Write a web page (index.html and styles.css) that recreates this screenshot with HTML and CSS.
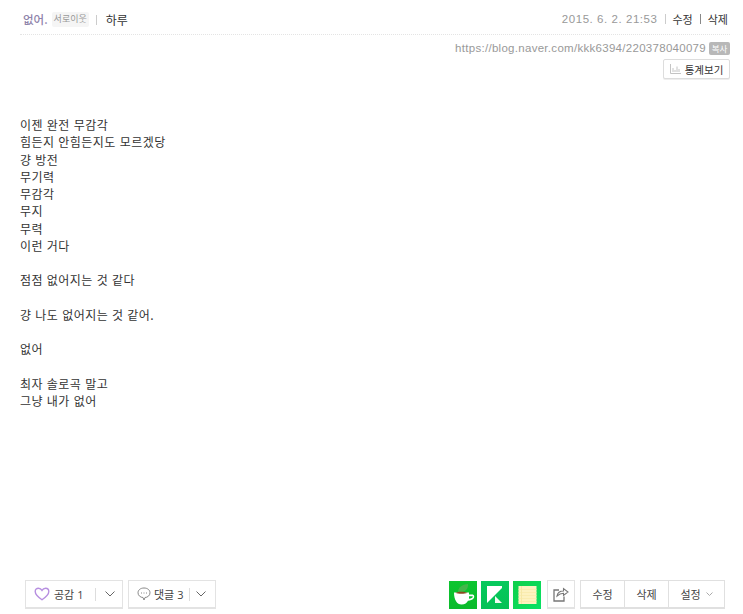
FILE: index.html
```html
<!DOCTYPE html>
<html lang="ko">
<head>
<meta charset="utf-8">
<title>없어.</title>
<link rel="stylesheet" href="styles.css">
</head>
<body>
<div class="page">
  <header class="head">
    <div class="head-left">
      <span class="nick">없어.</span>
      <span class="tag">서로이웃</span>
      <span class="vsep"></span>
      <span class="cat">하루</span>
    </div>
    <div class="head-right">
      <span class="date">2015. 6. 2. 21:53</span>
      <span class="vsep small"></span>
      <span class="act">수정</span>
      <span class="vsep small dark"></span>
      <span class="act">삭제</span>
    </div>
  </header>
  <div class="urlrow">
    <span class="url">https://blog.naver.com/kkk6394/220378040079</span>
    <span class="copy">복사</span>
  </div>
  <div class="statrow">
    <button class="stat">
      <svg class="stat-ico" width="11" height="10" viewBox="0 0 11 10"><path d="M.5 0v9.500H11M3 4v4M5 6v2M7 2.500V8M9 5v3" fill="none" stroke="#c4c4c4"/></svg>
      통계보기
    </button>
  </div>
  <main class="body">
    <p>이젠 완전 무감각</p>
    <p>힘든지 안힘든지도 모르겠당</p>
    <p>걍 방전</p>
    <p>무기력</p>
    <p>무감각</p>
    <p>무지</p>
    <p>무력</p>
    <p>이런 거다</p>
    <p>&nbsp;</p>
    <p>점점 없어지는 것 같다</p>
    <p>&nbsp;</p>
    <p>걍 나도 없어지는 것 같어.</p>
    <p>&nbsp;</p>
    <p>없어</p>
    <p>&nbsp;</p>
    <p>최자 솔로곡 말고</p>
    <p>그냥 내가 없어</p>
  </main>
  <footer class="foot">
    <div class="foot-left">
      <div class="box like">
        <svg width="16" height="14" viewBox="0 0 16 14"><path d="M8 12.800C4 10 1.200 7.500 1.200 4.500 1.200 2.500 2.700 1.200 4.400 1.200 5.800 1.200 7.200 2 8 3.400 8.800 2 10.200 1.200 11.600 1.200 13.300 1.200 14.800 2.500 14.800 4.500 14.800 7.500 12 10 8 12.800Z" fill="none" stroke="#b78fe0" stroke-width="1.400"/></svg>
        <span class="lbl">공감 <b>1</b></span>
        <span class="in-sep"></span>
        <svg class="chev" width="10" height="6" viewBox="0 0 10 6"><path d="M.5.500 5 5 9.500.5" fill="none" stroke="#666"/></svg>
      </div>
      <div class="box cmt">
        <svg width="14" height="14" viewBox="0 0 14 14"><path d="M7 1C3.500 1 1 3 1 5.800 1 8.500 3.500 10.500 6 10.500L7 13 8 10.500C10.500 10.500 13 8.500 13 5.800 13 3 10.500 1 7 1Z" fill="none" stroke="#888"/><path d="M4 6h1M6.500 6h1M9 6h1" stroke="#888"/></svg>
        <span class="lbl">댓글 <b>3</b></span>
        <span class="in-sep"></span>
        <svg class="chev" width="10" height="6" viewBox="0 0 10 6"><path d="M.5.500 5 5 9.500.5" fill="none" stroke="#666"/></svg>
      </div>
    </div>
    <div class="foot-right">
      <span class="app cafe">
        <svg width="28" height="28" viewBox="0 0 28 28"><path d="M9 11C9 6.500 13 3.500 19 3 19.500 8 16 12 9 11Z" fill="#43b649"/><path d="M5 11.500H20V13.500H23C25.500 13.500 25.800 16 24.500 17.500 23.300 18.900 21.300 19.500 19 19.700 17.800 22 16 23.500 12.500 23.500 8 23.500 5 19 5 11.500ZM20 15.200V17.800C22 17.500 23.800 16.800 23.800 15.800 23.800 15.300 23.300 15.200 22.800 15.200Z" fill="#fff" fill-rule="evenodd"/><path d="M6.500 11.800C9 10.300 15.500 10.300 18.500 11.800 15.500 13.200 9 13.200 6.500 11.800Z" fill="#8a4a20"/></svg>
      </span>
      <span class="app keep">
        <svg width="28" height="28" viewBox="0 0 28 28"><path d="M6 5H21V7L13 15 6 22Z" fill="#fff"/><path d="M14 15 21 22H14Z" fill="#f2fbf3"/></svg>
      </span>
      <span class="app memo">
        <svg width="28" height="28" viewBox="0 0 28 28"><rect x="5.500" y="5" width="18" height="18" fill="#fdf2c0"/><path d="M5.500 8.500H23.500M5.500 11.500H23.500M5.500 14.500H23.500M5.500 17.500H23.500M5.500 20.500H23.500" stroke="#f8eaa8" stroke-opacity=".7"/><path d="M8.500 5V23" stroke="#f5e8a6"/></svg>
      </span>
      <span class="share">
        <svg width="16" height="15" viewBox="0 0 16 15"><path d="M6 3H1V14H11V9.500" fill="none" stroke="#777" stroke-width="1.300"/><path d="M4 9C4.500 6 7 4 10.500 4V1.500L15 5 10.500 8.500V6.300C8 6.300 5.800 7.300 4 9Z" fill="none" stroke="#777" stroke-width="1.100"/></svg>
      </span>
      <div class="group">
        <span class="g-btn">수정</span>
        <span class="g-btn">삭제</span>
        <span class="g-btn set">설정
          <svg width="7" height="4" viewBox="0 0 7 4"><path d="M.5.500 3.500 3.500 6.500.5" fill="none" stroke="#aaa"/></svg>
        </span>
      </div>
    </div>
  </footer>
</div>
</body>
</html>
```

FILE: styles.css
```css
* { box-sizing: border-box; }
html, body { margin: 0; padding: 0; background: #fff; }
body {
  font-family: "Noto Sans CJK KR", "Liberation Sans", sans-serif;
  font-size: 11px;
  color: #333;
}
.page {
  width: 743px;
  height: 614px;
  display: flex;
  flex-direction: column;
}
.head {
  margin: 0 13px 0 20px;
  height: 35px;
  padding: 4px 2px 0 3px;
  border-bottom: 1px dotted #e4e4e4;
  display: flex;
  justify-content: space-between;
  align-items: center;
}
.head-left, .head-right { display: flex; align-items: center; }
.nick { color: #8f84ab; font-size: 11.500px; font-weight: 500; }
.tag {
  margin-left: 4px;
  padding: 0 2px;
  height: 15px;
  line-height: 14px;
  background: #f5f5f5;
  border-radius: 2px;
  font-size: 9px;
  color: #999;
}
.vsep { width: 1px; height: 10px; background: #ccc; margin: 2px 9px 0 7px; }
.cat { color: #333; font-size: 12px; }
.date { color: #999; font-family: "Liberation Sans", sans-serif; font-size: 11.500px; letter-spacing: .55px; }
.vsep.small { margin: 0 7px; }
.vsep.dark { background: #888; margin: 0 7px; }
.act { color: #333; font-size: 11px; }
.urlrow {
  margin: 5px 13px 0 0;
  height: 16px;
  display: flex;
  justify-content: flex-end;
  align-items: center;
}
.url { color: #999; font-family: "Liberation Sans", sans-serif; font-size: 11.500px; letter-spacing: .29px; }
.copy {
  margin-left: 3px;
  width: 21px;
  height: 13px;
  line-height: 13px;
  text-align: center;
  background: #b8b8b8;
  border-radius: 2px;
  color: #fff;
  font-size: 8.500px;
}
.statrow { margin: 3px 13px 0 0; display: flex; justify-content: flex-end; }
.stat {
  width: 67px;
  height: 20px;
  padding: 0;
  background: #fff;
  border: 1px solid #ddd;
  border-radius: 2px;
  box-shadow: 0 1px 0 #eee;
  font-family: inherit;
  font-size: 10.500px;
  color: #333;
  display: flex;
  align-items: center;
  justify-content: center;
  gap: 4px;
}
.body {
  flex: 1;
  margin: 37px 0 0 20px;
  font-size: 12px;
  letter-spacing: .46px;
  line-height: 17.250px;
  color: #333;
}
.body p { margin: 0; }
.foot {
  margin: 0 18px 5px 25px;
  height: 29px;
  display: flex;
  justify-content: space-between;
  align-items: flex-start;
}
.foot-left, .foot-right { display: flex; }
.foot-left { gap: 5px; }
.box {
  height: 29px;
  border: 1px solid #e3e3e3;
  border-bottom-width: 2px;
  display: flex;
  align-items: center;
  font-size: 11px;
  color: #444;
}
.like { width: 98px; padding-left: 8px; }
.cmt { width: 88px; padding-left: 8px; }
.like .lbl { margin-left: 4px; }
.cmt .lbl { margin-left: 3px; }
.lbl b { font-family: "Open Sans", sans-serif; font-weight: 400; font-size: 11px; }
.in-sep { width: 1px; height: 13px; background: #ddd; margin: 0 9px 0 11px; }
.cmt .in-sep { margin: 0 6px 0 5px; }
.foot-right { gap: 4px; }
.app { width: 28px; height: 28px; display: block; margin-top: 1px; }
.app svg { display: block; }
.cafe { background: linear-gradient(#0cc52f, #0abb2b); }
.keep { background: linear-gradient(#07c95c, #04c155); }
.memo { background: linear-gradient(135deg, #10cf4a, #08e264); }
.share {
  width: 28px;
  height: 29px;
  margin-left: 2px;
  border: 1px solid #e3e3e3;
  border-bottom-width: 2px;
  display: flex;
  align-items: center;
  justify-content: center;
}
.group {
  height: 29px;
  margin-left: 1px;
  width: 145px;
  display: flex;
  border: 1px solid #e0e0e0;
  border-bottom-width: 2px;
}
.g-btn {
  width: 44px;
  display: flex;
  align-items: center;
  justify-content: center;
  gap: 5px;
  font-size: 11px;
  color: #444;
  border-left: 1px solid #e0e0e0;
}
.g-btn:first-child { border-left: 0; width: 43px; }
.g-btn.set { width: 56px; }
```
